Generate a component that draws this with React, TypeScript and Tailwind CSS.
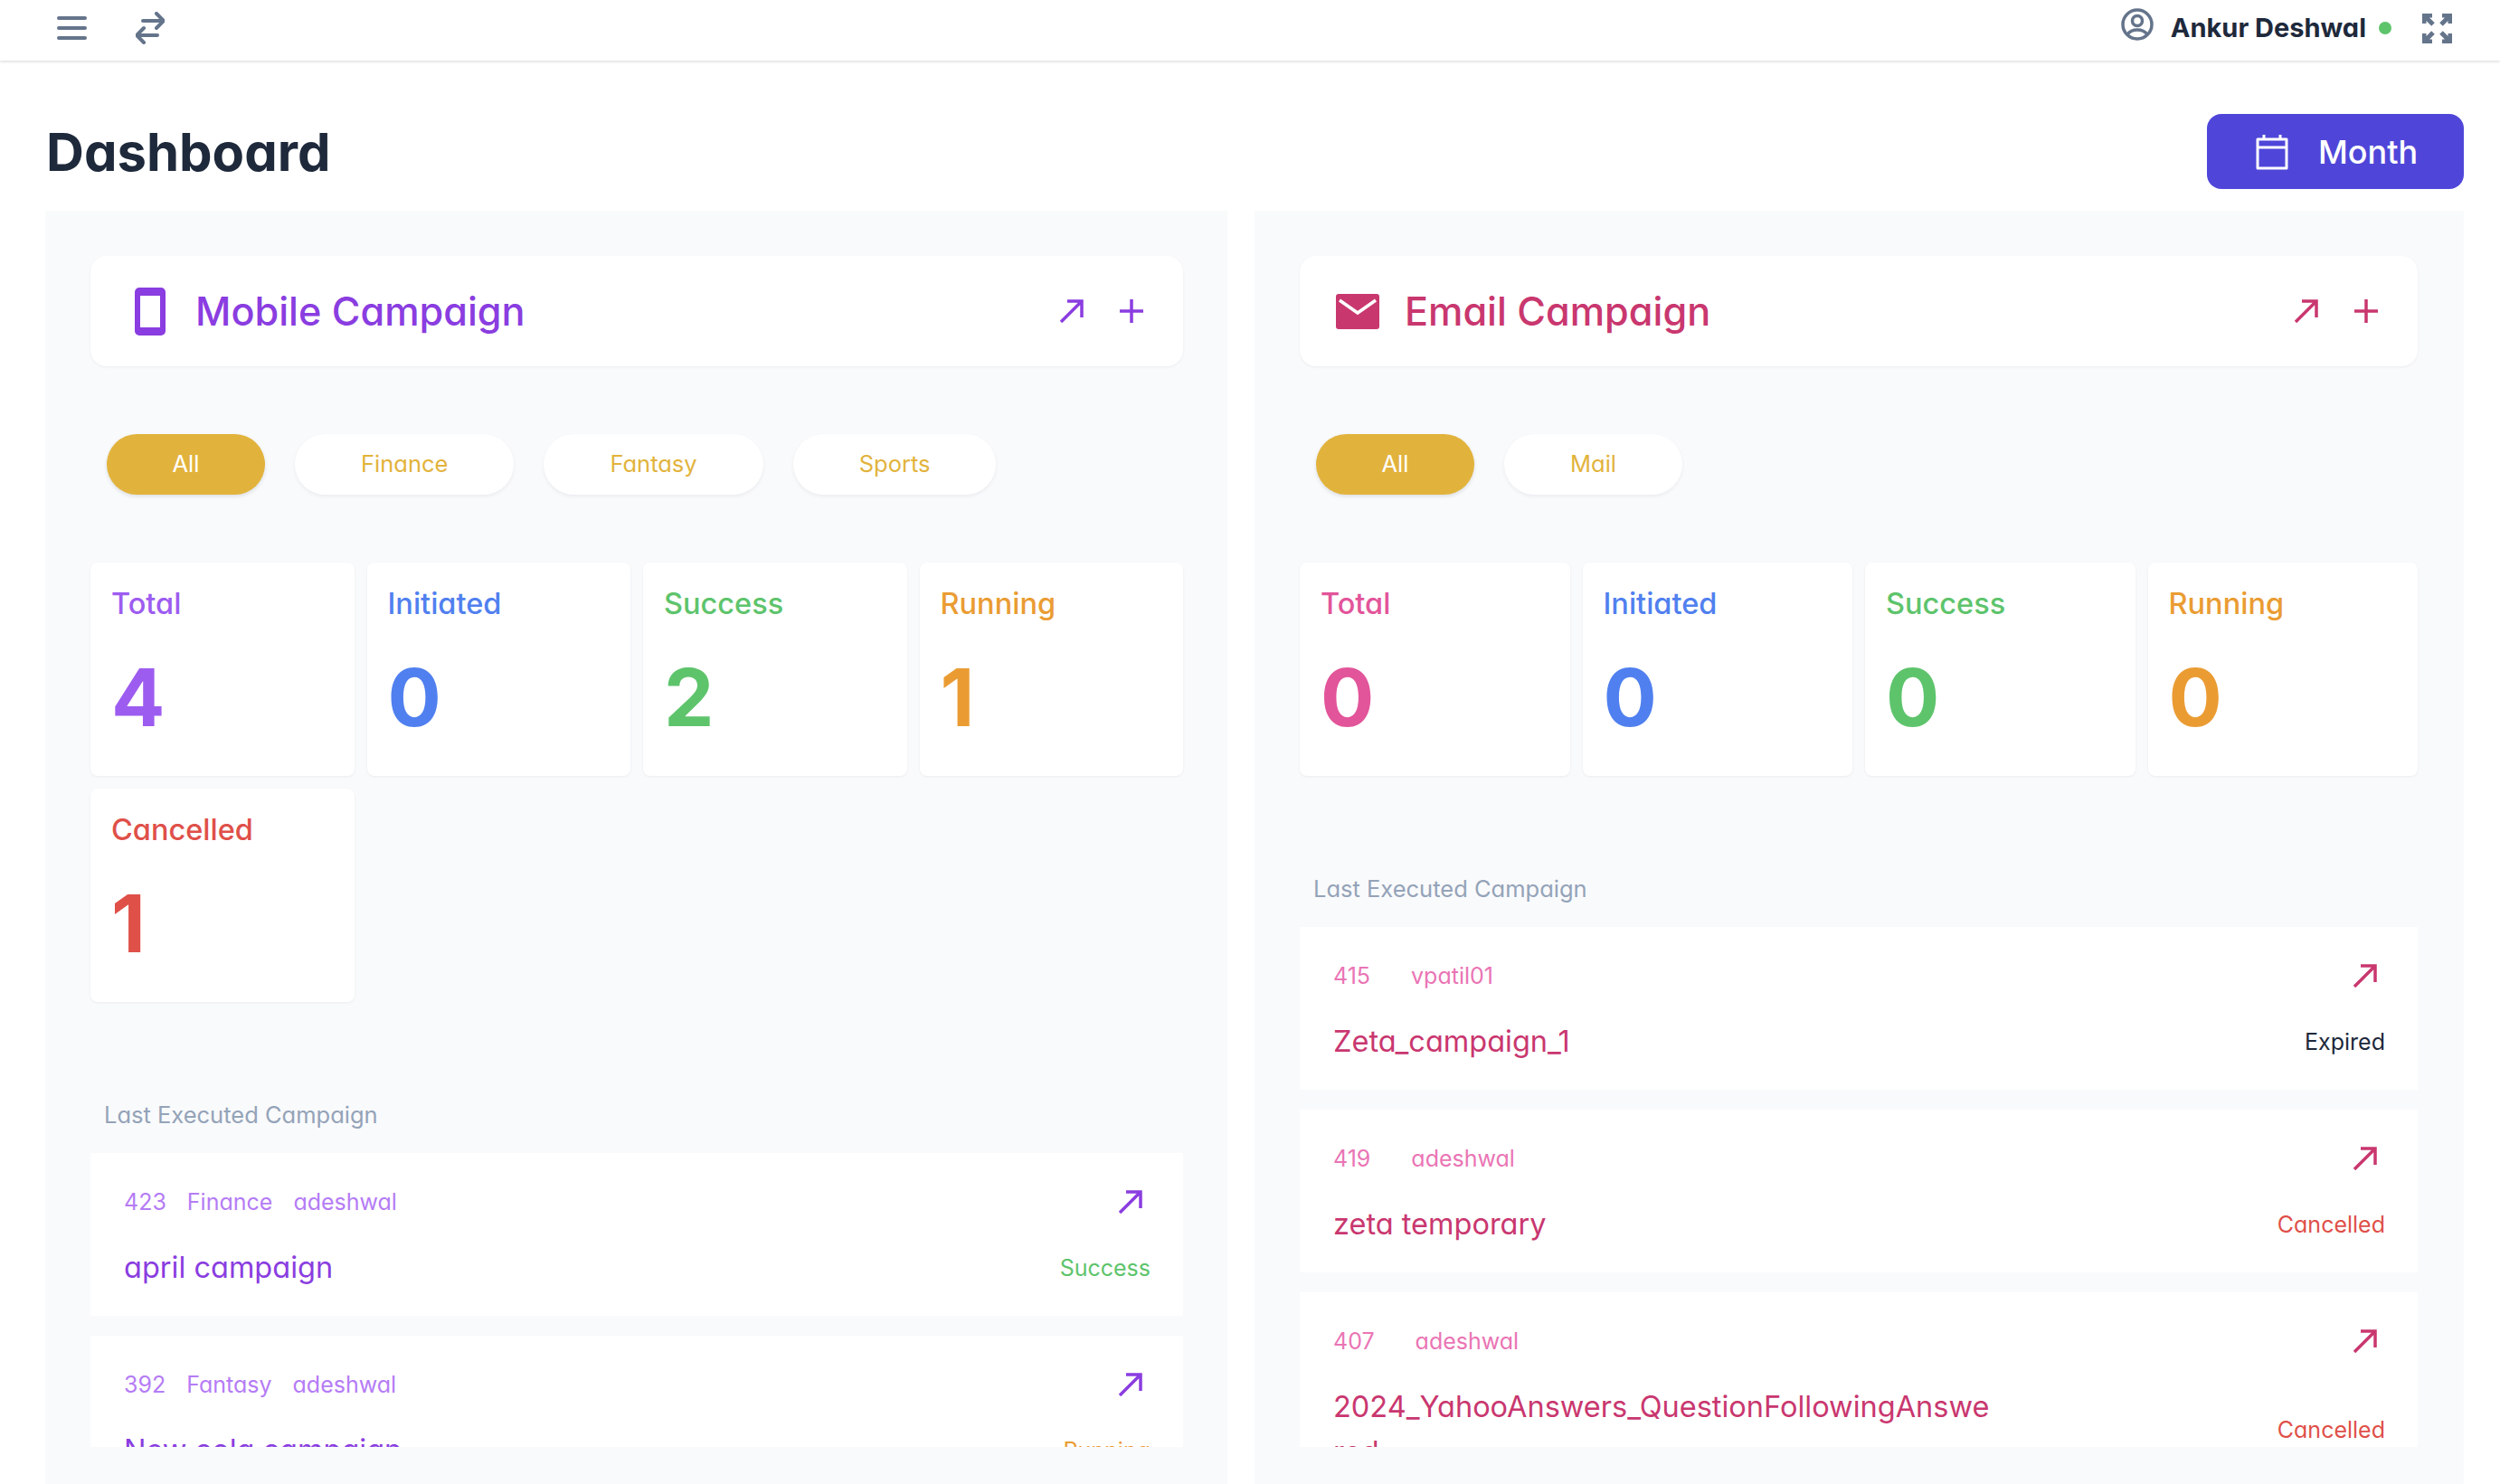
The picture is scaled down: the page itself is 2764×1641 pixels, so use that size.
import React from "react"

type Stat = { label: string; value: number; color: string }
type Item = { meta: string[]; name: string; status: string; statusColor: string }

const purpleStats: Stat[] = [
  { label: "Total", value: 4, color: "text-[#9d5cf0]" },
  { label: "Initiated", value: 0, color: "text-[#5080ef]" },
  { label: "Success", value: 2, color: "text-[#5ec46c]" },
  { label: "Running", value: 1, color: "text-[#ea9c33]" },
  { label: "Cancelled", value: 1, color: "text-[#df5049]" },
]

const pinkStats: Stat[] = [
  { label: "Total", value: 0, color: "text-[#e2559a]" },
  { label: "Initiated", value: 0, color: "text-[#5080ef]" },
  { label: "Success", value: 0, color: "text-[#5ec46c]" },
  { label: "Running", value: 0, color: "text-[#ea9c33]" },
]

const mobileItems: Item[] = [
  { meta: ["423", "Finance", "adeshwal"], name: "april campaign", status: "Success", statusColor: "text-[#5ec46c]" },
  { meta: ["392", "Fantasy", "adeshwal"], name: "New cola campaign", status: "Running", statusColor: "text-[#ea9c33]" },
]

const emailItems: Item[] = [
  { meta: ["415", "vpatil01"], name: "Zeta_campaign_1", status: "Expired", statusColor: "text-[#1e293b]" },
  { meta: ["419", "adeshwal"], name: "zeta temporary", status: "Cancelled", statusColor: "text-[#df5049]" },
  { meta: ["407", "adeshwal"], name: "2024_YahooAnswers_QuestionFollowingAnswered", status: "Cancelled", statusColor: "text-[#df5049]" },
]

function ArrowUpRight({ className }: { className: string }) {
  return (
    <svg viewBox="0 0 26 26" className={className} fill="none" stroke="currentColor" strokeWidth="3.500">
      <path d="M1 25 24 2M8 2h16v18" />
    </svg>
  )
}

function Plus({ className }: { className: string }) {
  return (
    <svg viewBox="0 0 26 26" className={className} fill="none" stroke="currentColor" strokeWidth="3.500">
      <path d="M13 0v26M0 13h26" />
    </svg>
  )
}

function StatCard({ stat }: { stat: Stat }) {
  return (
    <div className="bg-white rounded-lg shadow-[0_1px_3px_rgba(15,23,42,0.06)] pt-[26px] pb-[37px] px-[23px]">
      <div className={`text-[32.500px] leading-[40px] font-medium ${stat.color}`}>{stat.label}</div>
      <div className={`mt-[33px] text-[88px] leading-[100px] font-bold ${stat.color}`}>{stat.value}</div>
    </div>
  )
}

function CampaignRow({ item, metaColor, nameColor, gap }: { item: Item; metaColor: string; nameColor: string; gap: string }) {
  return (
    <div className="shrink-0 bg-white pt-[36px] pb-[28px] pl-[37px] pr-[36px]">
      <div className="flex items-center justify-between pr-[9px]">
        <div className={`flex text-[25px] leading-[36px] ${metaColor} ${gap}`}>
          {item.meta.map((m) => (
            <span key={m}>{m}</span>
          ))}
        </div>
        <ArrowUpRight className={`w-[26px] h-[26px] ${nameColor}`} />
      </div>
      <div className="mt-[30px] flex items-center justify-between">
        <div className={`max-w-[732px] break-all text-[32.500px] leading-[50px] ${nameColor}`}>{item.name}</div>
        <div className={`text-[25px] leading-[36px] ${item.statusColor}`}>{item.status}</div>
      </div>
    </div>
  )
}

function Panel({
  title,
  icon,
  accent,
  pills,
  stats,
  items,
  metaColor,
  gap,
  pad,
  titleGap,
}: {
  title: string
  icon: React.ReactNode
  accent: string
  pills: string[]
  stats: Stat[]
  items: Item[]
  metaColor: string
  gap: string
  pad: string
  titleGap: string
}) {
  return (
    <section className={`flex flex-col min-h-0 bg-[#f9fafc] pt-[50px] pb-[41px] pl-[50px] ${pad}`}>
      <div className="h-[122px] shrink-0 flex items-center justify-between bg-white rounded-[18px] shadow-[0_1px_3px_rgba(15,23,42,0.06)] pl-[40px] pr-[44px]">
        <div className={`flex items-center ${titleGap} ${accent}`}>
          {icon}
          <h2 className="text-[43.200px] leading-[60px] font-medium">{title}</h2>
        </div>
        <div className={`flex items-center gap-[40px] ${accent}`}>
          <ArrowUpRight className="w-[26px] h-[26px]" />
          <Plus className="w-[26px] h-[26px]" />
        </div>
      </div>

      <div className="mt-[75px] flex shrink-0 gap-[33px] pl-[18px]">
        {pills.map((p, i) => (
          <button
            key={p}
            className={
              i === 0
                ? "h-[67px] w-[175px] rounded-full bg-[#e2b33c] text-white text-[25.500px] shadow-[0_2px_4px_rgba(15,23,42,0.12)]"
                : "h-[67px] px-[73px] rounded-full bg-white text-[#e2b33c] text-[25.500px] shadow-[0_2px_4px_rgba(15,23,42,0.06)]"
            }
          >
            {p}
          </button>
        ))}
      </div>

      <div className="mt-[75px] grid shrink-0 grid-cols-4 gap-[14px]">
        {stats.map((s) => (
          <StatCard key={s.label} stat={s} />
        ))}
      </div>

      <div className="mt-[107px] mb-[24px] shrink-0 pl-[15px] text-[25.500px] leading-[36px] text-[#94a3b8]">Last Executed Campaign</div>

      <div className="flex-1 min-h-0 overflow-hidden flex flex-col gap-[22px]">
        {items.map((it) => (
          <CampaignRow key={it.meta[0]} item={it} metaColor={metaColor} nameColor={accent} gap={gap} />
        ))}
      </div>
    </section>
  )
}

export default function App() {
  return (
    <div className="h-screen overflow-hidden flex flex-col bg-white font-['Inter',sans-serif] [font-feature-settings:'cv11'] text-[#1e293b]">
      <header className="h-[67px] shrink-0 flex items-center justify-between bg-white shadow-[0_1px_3px_rgba(15,23,42,0.18)] pb-[5px] pl-[63px] pr-[53px]">
        <div className="flex items-center gap-[54px] text-[#64748b]">
          <svg viewBox="0 0 33 26" className="w-[33px] h-[26px]" fill="none" stroke="currentColor" strokeWidth="4" strokeLinecap="round">
            <path d="M2 2h29M2 13h29M2 24h29" />
          </svg>
          <svg viewBox="0 0 32 36" className="w-[32px] h-[36px]" fill="none" stroke="currentColor" strokeWidth="4" strokeLinecap="round" strokeLinejoin="round">
            <path d="M8 10h22M23 2l8 8-8 8M24 26H2M9 18l-8 8 8 8" />
          </svg>
        </div>
        <div className="flex items-center">
          <svg viewBox="0 0 36 36" className="mb-[8px] w-[36px] h-[36px] text-[#64748b]" fill="none" stroke="currentColor" strokeWidth="3.500">
            <circle cx="18" cy="18" r="16" />
            <circle cx="18" cy="14" r="5.500" />
            <path d="M7 29c3-4 7-5 11-5s8 1 11 5" />
          </svg>
          <span className="ml-[19px] text-[29px] font-bold">Ankur Deshwal</span>
          <span className="ml-[14px] w-[14px] h-[14px] rounded-full bg-[#5ec46c]" />
          <svg viewBox="0 0 33 33" className="ml-[34px] w-[33px] h-[33px] text-[#64748b]" fill="none" stroke="currentColor" strokeWidth="5">
            <path d="M2 11V2h9M3 3l9 9M22 2h9v9M30 3l-9 9M2 22v9h9M3 30l9-9M31 22v9h-9M30 30l-9-9" />
          </svg>
        </div>
      </header>

      <div className="flex-1 min-h-0 flex flex-col pl-[50px] pr-[40px]">
        <div className="h-[166px] shrink-0 flex items-center justify-between pl-[1px] pt-[59px] pb-[24px]">
          <h1 className="text-[58px] leading-[70px] font-bold text-[#1e293b]">Dashboard</h1>
          <button className="w-[284px] h-[83px] flex items-center justify-center gap-[32px] pl-[2px] rounded-[16px] bg-[#4f46d9] text-white text-[36px] font-medium">
            <svg viewBox="0 0 38 40" className="w-[38px] h-[40px]" fill="none" stroke="currentColor" strokeWidth="3">
              <path d="M3 6h32v32H3zM3 15h32M10 1v6M28 1v6" strokeLinejoin="round" />
            </svg>
            Month
          </button>
        </div>

        <div className="flex-1 min-h-0 grid grid-cols-[1307px_1337px] gap-[30px]">
          <Panel
            title="Mobile Campaign"
            accent="text-[#8a3de0]"
            icon={
              <svg viewBox="0 0 34 53" className="ml-[9px] w-[34px] h-[53px]" fill="currentColor">
                <path fillRule="evenodd" d="M5 0h24a5 5 0 0 1 5 5v43a5 5 0 0 1-5 5H5a5 5 0 0 1-5-5V5a5 5 0 0 1 5-5Zm1 9v35h22V9Z" />
              </svg>
            }
            pills={["All", "Finance", "Fantasy", "Sports"]}
            stats={purpleStats}
            items={mobileItems}
            metaColor="text-[#b57cf5]"
            gap="gap-[23px]"
            pad="pr-[49px]"
            titleGap="gap-[33px]"
          />
          <Panel
            title="Email Campaign"
            accent="text-[#c9376f]"
            icon={
              <svg viewBox="0 0 48 39" className="w-[48px] h-[39px]">
                <rect width="48" height="39" rx="3" fill="currentColor" />
                <path d="M4 7l20 14 20-14" fill="none" stroke="#fff" strokeWidth="3.500" />
              </svg>
            }
            pills={["All", "Mail"]}
            stats={pinkStats}
            items={emailItems}
            metaColor="text-[#ea75b5]"
            gap="gap-[45px]"
            pad="pr-[51px]"
            titleGap="gap-[28px]"
          />
        </div>
      </div>
    </div>
  )
}
